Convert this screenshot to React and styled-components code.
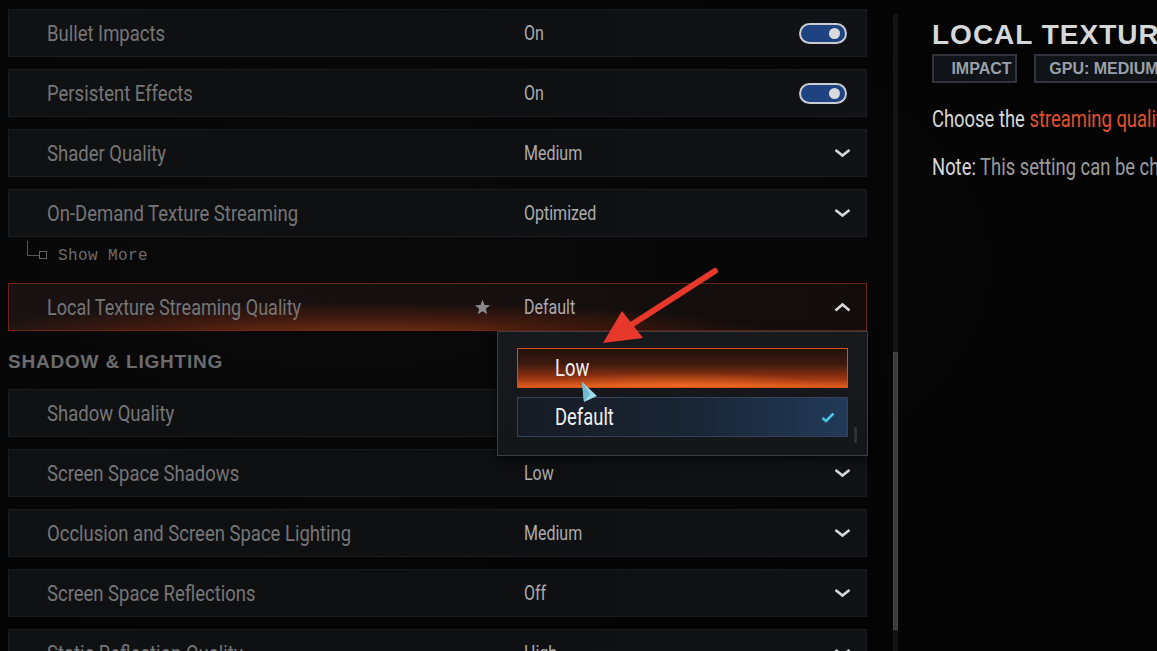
import React from "react";
import styled, { createGlobalStyle } from "styled-components";

const Global = createGlobalStyle`
  html, body { margin: 0; padding: 0; background: #050505; }
  body { width: 1157px; height: 651px; overflow: hidden; font-family: Roboto, "Liberation Sans", sans-serif; }
  * { box-sizing: border-box; }
`;

const NARROW = `Roboto, "Liberation Sans", sans-serif`;

const Page = styled.div`
  position: relative;
  display: flex;
  width: 1157px;
  height: 651px;
  overflow: hidden;
  background: radial-gradient(ellipse at 30% 40%, #0a0a0b 0%, #040404 70%);
`;

const LeftColumn = styled.div`
  width: 867px;
  flex: none;
  padding: 9px 0 0 8px;
  display: flex;
  flex-direction: column;
`;

/* condensed game-style lettering */
const Squeeze = styled.span`
  display: inline-block;
  white-space: nowrap;
  transform: scaleX(${(p) => p.$s || 0.83});
  transform-origin: left center;
`;

const Row = styled.div`
  position: relative;
  height: 48px;
  flex: none;
  margin-bottom: 12px;
  display: grid;
  grid-template-columns: 477px 1fr auto;
  align-items: center;
  padding: 0 ${(p) => (p.$toggle ? "19px" : "15px")} 0 38px;
  border: 1px solid ${(p) => (p.$active ? "#6e2415" : "#1a1c1f")};
  background: ${(p) =>
    p.$active
      ? "radial-gradient(ellipse 60% 95% at 42% 118%, rgba(215,85,28,0.55) 0%, rgba(140,45,15,0.38) 45%, rgba(20,14,12,0) 82%), linear-gradient(90deg, #1a1212 0%, #120d0c 100%)"
      : "linear-gradient(90deg, #101113 0%, #0e0f11 45%, #111215 100%)"};
`;

const Label = styled.div`
  display: flex;
  align-items: center;
  justify-content: space-between;
  padding-right: 33px;
  font-family: ${NARROW};
  font-size: 22px;
  color: #767678;
  white-space: nowrap;
`;

const Value = styled.div`
  font-family: ${NARROW};
  font-size: 20px;
  color: #acacae;
  white-space: nowrap;
`;

const Toggle = styled.div`
  width: 48px;
  height: 21px;
  border-radius: 11px;
  border: 2px solid #c9ccd3;
  background: #1f4380;
  display: flex;
  align-items: center;
  justify-content: flex-end;
  padding-right: 5px;
  &::after {
    content: "";
    width: 11px;
    height: 11px;
    border-radius: 50%;
    background: #d9dadd;
  }
`;

const ShowMore = styled.div`
  position: relative;
  height: 14px;
  margin: 0 0 20px 0;
  display: flex;
  align-items: center;
  padding-left: 50px;
  font-family: "Liberation Mono", "DejaVu Sans Mono", monospace;
  font-size: 16px;
  color: #6d6d6f;
  letter-spacing: 0.4px;
`;

const TreeMark = styled.span`
  position: absolute;
  left: 19px;
  top: -8px;
  width: 16px;
  height: 15px;
  border-left: 1px solid #555;
  border-bottom: 1px solid #555;
  &::after {
    content: "";
    position: absolute;
    right: -4px;
    bottom: -4px;
    width: 6px;
    height: 6px;
    border: 1px solid #666;
    background: #050505;
  }
`;

const SectionHeader = styled.div`
  height: 38px;
  flex: none;
  margin-bottom: 8px;
  display: flex;
  align-items: center;
  font-family: "Liberation Sans", Arial, sans-serif;
  font-weight: 700;
  font-size: 19px;
  letter-spacing: 0.8px;
  color: #6c6c6e;
`;

const ActiveWrap = styled.div`
  position: relative;
  z-index: 2;
`;

const Dropdown = styled.div`
  position: absolute;
  left: 489px;
  top: 48px;
  width: 371px;
  height: 125px;
  padding: 16px 19px 0 19px;
  display: flex;
  flex-direction: column;
  gap: 9px;
  border: 1px solid #3b3e43;
  background: linear-gradient(180deg, #17191d 0%, #14161a 100%);
  box-shadow: 0 4px 10px rgba(0, 0, 0, 0.6);
`;

const Option = styled.div`
  height: 40px;
  display: flex;
  align-items: center;
  justify-content: space-between;
  padding: 0 12px 0 37px;
  font-family: ${NARROW};
  font-size: 23px;
  color: #f0f0f0;
  border: 1px solid ${(p) => (p.$hover ? "#d4501c" : "#34435a")};
  background: ${(p) =>
    p.$hover
      ? "radial-gradient(ellipse 70% 70% at 50% 110%, rgba(255,120,40,0.7) 0%, rgba(255,120,40,0) 70%), linear-gradient(180deg, #24120d 0%, #3e1a0e 40%, #9a3612 78%, #e05a1c 100%)"
      : "linear-gradient(90deg, #161b24 0%, #1a2636 55%, #223a58 100%)"};
`;

const ScrollMark = styled.div`
  position: absolute;
  right: 10px;
  bottom: 12px;
  width: 3px;
  height: 16px;
  background: #2e3034;
`;

const ScrollTrack = styled.div`
  flex: none;
  width: 5px;
  margin: 14px 0 0 26px;
  height: 637px;
  background: #141416;
  display: flex;
  flex-direction: column;
  padding-top: 338px;
`;

const ScrollThumb = styled.div`
  height: 278px;
  background: #38393c;
  border: 1px solid #48494c;
`;

const RightPanel = styled.div`
  flex: 1;
  min-width: 0;
  margin-left: 34px;
  padding-top: 18px;
  overflow: hidden;
  position: relative;
`;

const Title = styled.div`
  font-family: "Liberation Sans", Arial, sans-serif;
  font-weight: 700;
  font-size: 28px;
  line-height: 34px;
  letter-spacing: 1px;
  color: #d6d7d9;
  white-space: nowrap;
`;

const Tags = styled.div`
  display: flex;
  gap: 17px;
  margin-top: 2px;
`;

const Tag = styled.div`
  flex: none;
  width: ${(p) => p.$w}px;
  height: 29px;
  display: flex;
  align-items: center;
  justify-content: center;
  padding-left: ${(p) => p.$pl || 0}px;
  border: 2px solid #31353b;
  background: #101317;
  font-family: "Liberation Sans", Arial, sans-serif;
  font-weight: 700;
  font-size: 16px;
  color: #99a0a8;
  white-space: nowrap;
`;

const Para = styled.p`
  margin: ${(p) => p.$mt}px 0 0 0;
  font-family: ${NARROW};
  font-size: 23px;
  line-height: 28px;
  color: #d8d8d8;
  white-space: nowrap;
`;

const Accent = styled.span`
  color: #e2512c;
`;

const Muted = styled.span`
  color: #9b9b9b;
`;

const Overlay = styled.svg`
  position: absolute;
  left: 0;
  top: 0;
  pointer-events: none;
  z-index: 5;
`;

const Chevron = ({ up }) => (
  <svg width="17" height="10" viewBox="0 0 17 10">
    <polyline
      points={up ? "1.5,8.5 8.5,2.5 15.5,8.5" : "1.5,2 8.5,7.5 15.5,2"}
      fill="none"
      stroke="#d8d8da"
      strokeWidth="2.6"
      strokeLinejoin="miter"
    />
  </svg>
);

const Star = () => (
  <svg width="17" height="16" viewBox="0 0 24 23">
    <polygon
      points="12,1 14.9,8.6 23,9 16.7,14.1 18.8,22 12,17.5 5.2,22 7.3,14.1 1,9 9.1,8.6"
      fill="#8a8a8c"
    />
  </svg>
);

const Check = () => (
  <svg width="14" height="11" viewBox="0 0 14 11">
    <polyline points="1.5,6 5,9 12.5,1.5" fill="none" stroke="#4cc4ea" strokeWidth="2.6" />
  </svg>
);

const topRows = [
  { label: "Bullet Impacts", value: "On", toggle: true },
  { label: "Persistent Effects", value: "On", toggle: true },
  { label: "Shader Quality", value: "Medium" },
  { label: "On-Demand Texture Streaming", value: "Optimized" },
];

const shadowRows = [
  { label: "Shadow Quality", value: "" },
  { label: "Screen Space Shadows", value: "Low" },
  { label: "Occlusion and Screen Space Lighting", value: "Medium" },
  { label: "Screen Space Reflections", value: "Off" },
  { label: "Static Reflection Quality", value: "High" },
];

const SettingRow = ({ label, value, toggle }) => (
  <Row $toggle={toggle}>
    <Label>
      <Squeeze $s={0.84}>{label}</Squeeze>
    </Label>
    <Value>
      <Squeeze $s={0.8}>{value}</Squeeze>
    </Value>
    {toggle ? <Toggle /> : <Chevron />}
  </Row>
);

export default function App() {
  return (
    <>
      <Global />
      <Page>
        <LeftColumn>
          {topRows.map((r) => (
            <SettingRow key={r.label} {...r} />
          ))}
          <ShowMore>
            <TreeMark />
            Show More
          </ShowMore>
          <ActiveWrap>
            <Row $active>
              <Label>
                <Squeeze $s={0.82}>Local Texture Streaming Quality</Squeeze>
                <Star />
              </Label>
              <Value>
                <Squeeze $s={0.8}>Default</Squeeze>
              </Value>
              <Chevron up />
            </Row>
            <Dropdown>
              <Option $hover>
                <Squeeze $s={0.8}>Low</Squeeze>
              </Option>
              <Option>
                <Squeeze $s={0.8}>Default</Squeeze>
                <Check />
              </Option>
              <ScrollMark />
            </Dropdown>
          </ActiveWrap>
          <SectionHeader>SHADOW &amp; LIGHTING</SectionHeader>
          {shadowRows.map((r) => (
            <SettingRow key={r.label} {...r} />
          ))}
        </LeftColumn>
        <ScrollTrack>
          <ScrollThumb />
        </ScrollTrack>
        <RightPanel>
          <Title>LOCAL TEXTURE STREAMING QUALITY</Title>
          <Tags>
            <Tag $w={85} $pl={14}>IMPACT</Tag>
            <Tag $w={140}>GPU: MEDIUM</Tag>
          </Tags>
          <Para $mt={23}>
            <Squeeze $s={0.8}>
              Choose the <Accent>streaming quality of local textures.</Accent>
            </Squeeze>
          </Para>
          <Para $mt={20}>
            <Squeeze $s={0.8}>
              Note: <Muted>This setting can be changed in the menu.</Muted>
            </Squeeze>
          </Para>
        </RightPanel>
        <Overlay width="1157" height="651" viewBox="0 0 1157 651">
          <line x1="715" y1="271" x2="628" y2="327" stroke="#e8382b" strokeWidth="6" strokeLinecap="round" />
          <polygon points="603,343 622,311 643,338" fill="#e8382b" />
          <polygon points="582,382 597,396 584,402" fill="#9fd9e8" />
          <polygon points="582,382 590,394 584,402" fill="#6fb9d0" />
        </Overlay>
      </Page>
    </>
  );
}
